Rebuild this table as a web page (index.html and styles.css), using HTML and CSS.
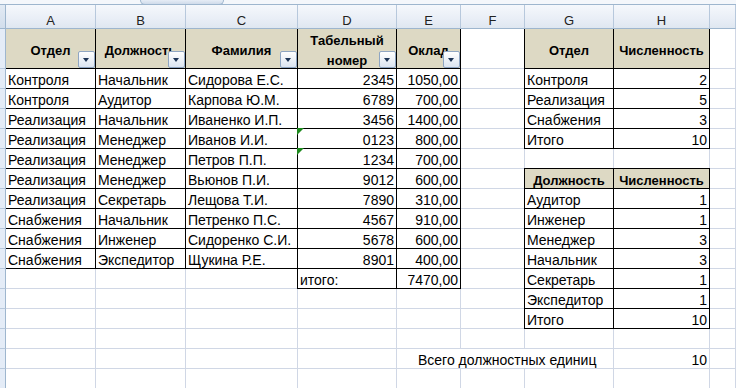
FILE: index.html
```html
<!DOCTYPE html>
<html lang="ru">
<head>
    <meta charset="UTF-8">
    <meta name="viewport" content="width=device-width, initial-scale=1.0">
    <title>Штатное расписание</title>
    <link rel="stylesheet" href="styles.css">
</head>
<body>
    <div class="topbar"><div class="tab"></div></div>

    <div class="sheet">
        <!-- заголовки столбцов -->
        <div class="corner"></div>
        <div class="ch">A</div><div class="ch">B</div><div class="ch">C</div><div class="ch">D</div>
        <div class="ch">E</div><div class="ch">F</div><div class="ch">G</div><div class="ch">H</div><div class="ch"></div>

        <!-- 1 -->
        <div class="rh"></div>
        <div class="c h bx">Отдел<span class="flt"></span></div>
        <div class="c h bx">Должность<span class="flt"></span></div>
        <div class="c h bx">Фамилия<span class="flt"></span></div>
        <div class="c h bx two">Табельный<br>номер<span class="flt"></span></div>
        <div class="c h bx">Оклад<span class="flt"></span></div>
        <div class="c"></div>
        <div class="c h bx bl">Отдел</div>
        <div class="c h bx">Численность</div>
        <div class="c"></div>

        <!-- 2 -->
        <div class="rh"></div>
        <div class="c bx">Контроля</div><div class="c bx">Начальник</div><div class="c bx">Сидорова Е.С.</div>
        <div class="c bx n">2345</div><div class="c bx n">1050,00</div><div class="c"></div>
        <div class="c bx bl">Контроля</div><div class="c bx n">2</div><div class="c"></div>

        <!-- 3 -->
        <div class="rh"></div>
        <div class="c bx">Контроля</div><div class="c bx">Аудитор</div><div class="c bx">Карпова Ю.М.</div>
        <div class="c bx n">6789</div><div class="c bx n">700,00</div><div class="c"></div>
        <div class="c bx bl">Реализация</div><div class="c bx n">5</div><div class="c"></div>

        <!-- 4 -->
        <div class="rh"></div>
        <div class="c bx">Реализация</div><div class="c bx">Начальник</div><div class="c bx">Иваненко И.П.</div>
        <div class="c bx n">3456</div><div class="c bx n">1400,00</div><div class="c"></div>
        <div class="c bx bl">Снабжения</div><div class="c bx n">3</div><div class="c"></div>

        <!-- 5 -->
        <div class="rh"></div>
        <div class="c bx">Реализация</div><div class="c bx">Менеджер</div><div class="c bx">Иванов И.И.</div>
        <div class="c bx n mark"><span class="tri"></span>0123</div><div class="c bx n">800,00</div><div class="c"></div>
        <div class="c bx bl">Итого</div><div class="c bx n">10</div><div class="c"></div>

        <!-- 6 -->
        <div class="rh"></div>
        <div class="c bx">Реализация</div><div class="c bx">Менеджер</div><div class="c bx">Петров П.П.</div>
        <div class="c bx n mark"><span class="tri"></span>1234</div><div class="c bx n">700,00</div><div class="c"></div>
        <div class="c"></div><div class="c"></div><div class="c"></div>

        <!-- 7 -->
        <div class="rh"></div>
        <div class="c bx">Реализация</div><div class="c bx">Менеджер</div><div class="c bx">Вьюнов П.И.</div>
        <div class="c bx n">9012</div><div class="c bx n">600,00</div><div class="c"></div>
        <div class="c hs bx bl bt">Должность</div><div class="c hs bx bt">Численность</div><div class="c"></div>

        <!-- 8 -->
        <div class="rh"></div>
        <div class="c bx">Реализация</div><div class="c bx">Секретарь</div><div class="c bx">Лещова Т.И.</div>
        <div class="c bx n">7890</div><div class="c bx n">310,00</div><div class="c"></div>
        <div class="c bx bl">Аудитор</div><div class="c bx n">1</div><div class="c"></div>

        <!-- 9 -->
        <div class="rh"></div>
        <div class="c bx">Снабжения</div><div class="c bx">Начальник</div><div class="c bx">Петренко П.С.</div>
        <div class="c bx n">4567</div><div class="c bx n">910,00</div><div class="c"></div>
        <div class="c bx bl">Инженер</div><div class="c bx n">1</div><div class="c"></div>

        <!-- 10 -->
        <div class="rh"></div>
        <div class="c bx">Снабжения</div><div class="c bx">Инженер</div><div class="c bx">Сидоренко С.И.</div>
        <div class="c bx n">5678</div><div class="c bx n">600,00</div><div class="c"></div>
        <div class="c bx bl">Менеджер</div><div class="c bx n">3</div><div class="c"></div>

        <!-- 11 -->
        <div class="rh"></div>
        <div class="c bx">Снабжения</div><div class="c bx">Экспедитор</div><div class="c bx">Щукина Р.Е.</div>
        <div class="c bx n">8901</div><div class="c bx n">400,00</div><div class="c"></div>
        <div class="c bx bl">Начальник</div><div class="c bx n">3</div><div class="c"></div>

        <!-- 12 -->
        <div class="rh"></div>
        <div class="c"></div><div class="c"></div><div class="c"></div>
        <div class="c bx bl">итого:</div><div class="c bx n">7470,00</div><div class="c"></div>
        <div class="c bx bl">Секретарь</div><div class="c bx n">1</div><div class="c"></div>

        <!-- 13 -->
        <div class="rh"></div>
        <div class="c"></div><div class="c"></div><div class="c"></div><div class="c"></div><div class="c"></div><div class="c"></div>
        <div class="c bx bl">Экспедитор</div><div class="c bx n">1</div><div class="c"></div>

        <!-- 14 -->
        <div class="rh"></div>
        <div class="c"></div><div class="c"></div><div class="c"></div><div class="c"></div><div class="c"></div><div class="c"></div>
        <div class="c bx bl">Итого</div><div class="c bx n">10</div><div class="c"></div>

        <!-- 15 -->
        <div class="rh"></div>
        <div class="c"></div><div class="c"></div><div class="c"></div><div class="c"></div><div class="c"></div><div class="c"></div>
        <div class="c"></div><div class="c"></div><div class="c"></div>

        <!-- 16 -->
        <div class="rh"></div>
        <div class="c"></div><div class="c"></div><div class="c"></div><div class="c"></div>
        <div class="c span3 total">Всего должностных единиц</div>
        <div class="c n">10</div><div class="c"></div>

        <!-- 17 -->
        <div class="rh"></div>
        <div class="c"></div><div class="c"></div><div class="c"></div><div class="c"></div><div class="c"></div><div class="c"></div>
        <div class="c"></div><div class="c"></div><div class="c"></div>
    </div>
</body>
</html>
```

FILE: styles.css
```css
body {
    margin: 0;
    overflow: hidden;
    background: #fff;
    font-family: "Liberation Sans", Arial, sans-serif;
    font-size: 13px;
    color: #000;
}
.topbar {
    height: 5px;
    box-sizing: border-box;
    background: #f4f7fb;
    border-bottom: 1px solid #9eb6ce;
}
.tab {
    margin-left: 140px;
    width: 84px;
    height: 5px;
    box-sizing: border-box;
    background: linear-gradient(#e6edf6, #cfdbea);
    border: 1px solid #9eb6ce;
    border-top: none;
    border-radius: 0 0 5px 5px;
}
.sheet {
    display: grid;
    grid-template-columns: 6px 90px 90px 112px 99px 64px 64px 89px 96px 1fr;
    grid-template-rows: 24px 40px repeat(16, 20px);
}
.sheet > div {
    box-sizing: border-box;
}

/* заголовки строк и столбцов */
.corner {
    background: linear-gradient(#e2eaf4, #d2deec);
    border-right: 1px solid #9eb6ce;
    border-bottom: 1px solid #9eb6ce;
}
.ch {
    display: flex;
    align-items: flex-end;
    justify-content: center;
    line-height: 15px;
    color: #222;
    background: linear-gradient(#f5f8fc, #e9eef6 60%, #dfe7f1);
    border-right: 1px solid #b7c8dc;
    border-bottom: 1px solid #9eb6ce;
}
.rh {
    background: #e4ecf7;
    border-right: 1px solid #9eb6ce;
    border-bottom: 1px solid #b7c8dc;
}

/* ячейки */
.c {
    padding: 2px 2px 0 2px;
    font-size: 14px;
    line-height: 19px;
    white-space: nowrap;
    border-right: 1px solid #d0d7e5;
    border-bottom: 1px solid #d0d7e5;
}
.n {
    text-align: right;
}
.bx {
    border-right-color: #000;
    border-bottom-color: #000;
}
.bl {
    box-shadow: -1px 0 0 #000;
}
.bt {
    box-shadow: 0 -1px 0 #000;
}
.bl.bt {
    box-shadow: -1px -1px 0 #000, -1px 0 0 #000, 0 -1px 0 #000;
}
.h {
    position: relative;
    display: flex;
    align-items: center;
    justify-content: center;
    padding: 4px 0 0 0;
    font-size: 13px;
    line-height: 16px;
    font-weight: bold;
    text-align: center;
    overflow: hidden;
    background: #ddd9c4;
}
.h.two {
    line-height: 20px;
}
.h.bl {
    box-shadow: -1px 0 0 #000;
}
.hs {
    font-size: 13px;
    font-weight: bold;
    text-align: center;
    background: #ddd9c4;
}
.span3 {
    grid-column: span 3;
}
.total {
    padding-left: 21px;
}

/* кнопка автофильтра */
.flt {
    position: absolute;
    right: 0;
    bottom: 0;
    width: 17px;
    height: 17px;
    box-sizing: border-box;
    border: 1px solid #8fa6c3;
    border-radius: 2px;
    background: linear-gradient(#ffffff, #dbe4f0);
}
.flt::after {
    content: "";
    position: absolute;
    left: 4px;
    top: 6px;
    border-left: 3.5px solid transparent;
    border-right: 3.5px solid transparent;
    border-top: 4px solid #1d3557;
}

/* зелёный уголок: число сохранено как текст */
.mark {
    position: relative;
}
.tri {
    position: absolute;
    left: -1px;
    top: -1px;
    width: 0;
    height: 0;
    border-top: 7px solid #1e8a1e;
    border-right: 7px solid transparent;
}
```
